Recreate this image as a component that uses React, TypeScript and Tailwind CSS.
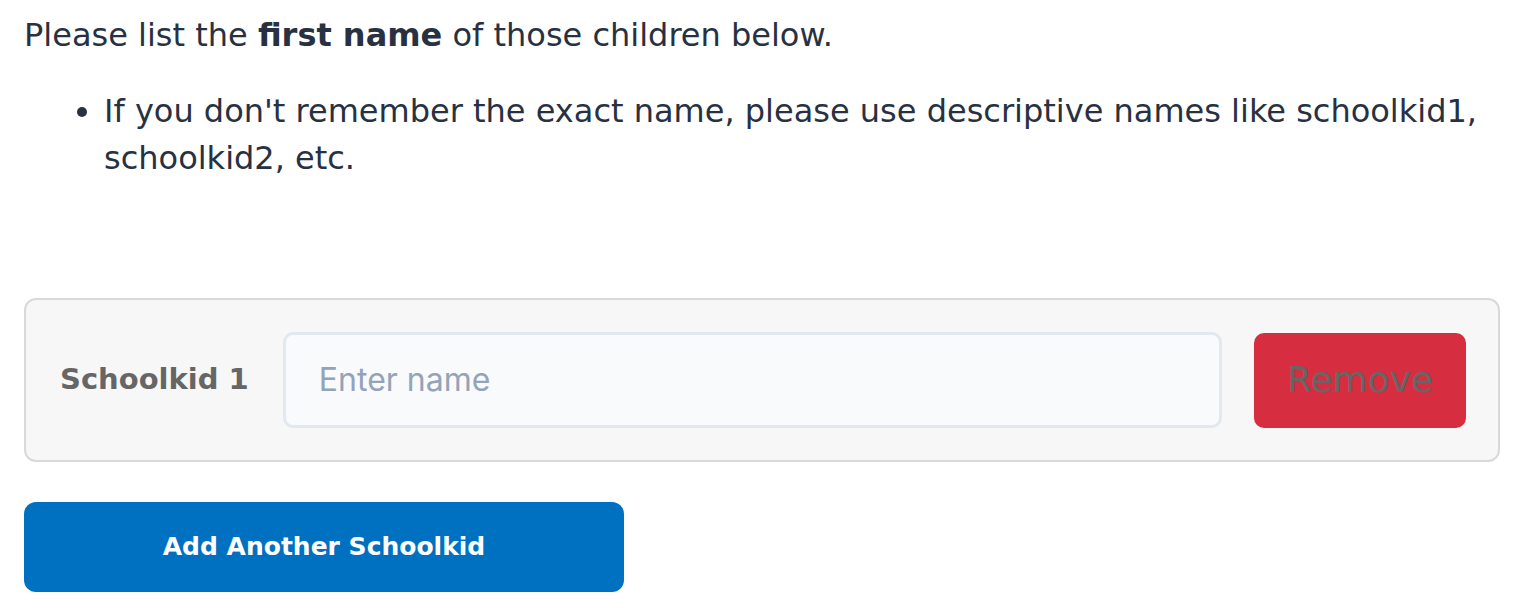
import React from "react";

export default function App() {
  return (
    <div className="w-[1526px] h-[608px] bg-white overflow-hidden">
      <div className="pl-[24px] pr-[26px] pt-[12px] font-['DejaVu_Sans',sans-serif] text-[#273142]">
        <p className="text-[32px] leading-[47px]">
          Please list the <span className="font-bold">first name</span> of those children below.
        </p>
        <ul className="mt-[29px] pl-[80px] list-disc text-[32px] leading-[47px]">
          <li>
            If you don't remember the exact name, please use descriptive names like schoolkid1, schoolkid2, etc.
          </li>
        </ul>
        <div className="mt-[116px] w-[1476px] h-[164px] rounded-[12px] border-2 border-[#d9d9d9] bg-[#f7f7f7] flex items-center pl-[34px] pr-[32px]">
          <div className="w-[223px] text-[29px] font-bold text-[#666666]">Schoolkid 1</div>
          <div className="w-[940px] h-[96px] rounded-[10px] border-[3px] border-[#e2e8f0] bg-[#f8fafc] flex items-center pl-[33px] font-['Inter',sans-serif] text-[32px] text-[#94a3b8]">
            Enter name
          </div>
          <div className="ml-[32px] w-[212px] h-[95px] rounded-[10px] bg-[#d62e40] flex items-center justify-center text-[36px] text-[#666666]">
            Remove
          </div>
        </div>
        <div className="mt-[40px] w-[600px] h-[90px] rounded-[12px] bg-[#0070c0] flex items-center justify-center text-white text-[25px] font-bold">
          Add Another Schoolkid
        </div>
      </div>
    </div>
  );
}
